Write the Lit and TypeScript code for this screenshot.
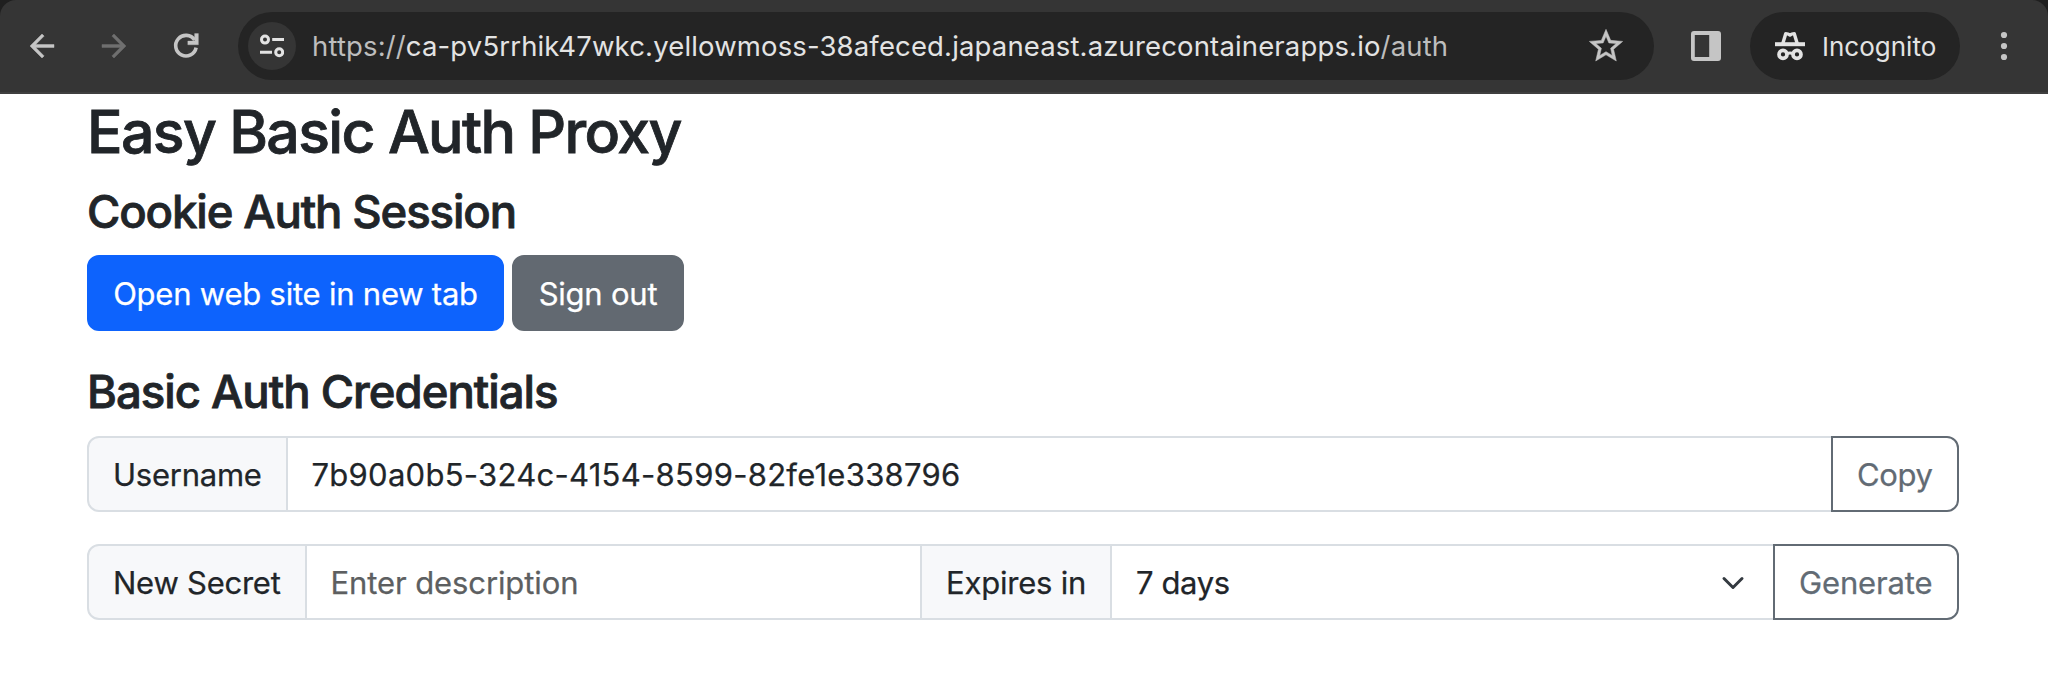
import { LitElement, html, css } from "lit";
import { customElement } from "lit/decorators.js";

@customElement("browser-toolbar")
class BrowserToolbar extends LitElement {
  static styles = css`
    :host { display: block; background: #1f1f1f; font-family: Inter, "Liberation Sans", sans-serif; }
    .bar {
      box-sizing: border-box; height: 94px; display: flex; align-items: center;
      background: #353535; border-bottom: 2px solid #3f3f3f;
      border-radius: 16px 16px 0 0; color: #c5c5c5; padding: 0 26px 0 24px;
    }
    svg { display: block; flex: none; fill: currentColor; }
    .nav { display: flex; gap: 36px; }
    .nav svg { stroke: currentColor; stroke-width: 0.3; }
    .nav .dim { color: #6f6f6f; }
    .address {
      box-sizing: border-box; width: 1416px; height: 68px; margin-left: 34px; padding: 0 28px 0 10px;
      display: flex; align-items: center; background: #242424; border-radius: 34px;
    }
    .site { width: 48px; height: 48px; border-radius: 50%; background: #353535; display: grid; place-items: center; color: #e3e3e3; }
    .url { flex: 1; margin-left: 16px; font-size: 27.5px; line-height: 34px; letter-spacing: 0.146px; white-space: nowrap; color: #bdbdbd; }
    .host { color: #e3e3e3; }
    .star { stroke: currentColor; stroke-width: 0.3; }
    .panel { margin-left: 37px; }
    .incognito {
      box-sizing: border-box; width: 210px; height: 68px; margin-left: 29px; padding-left: 25px; border-radius: 34px;
      background: #242424; color: #e3e3e3; display: flex; align-items: center; gap: 17px;
      font-size: 26px; line-height: 34px;
    }
    .incognito span { padding-top: 1px; }
    .more { margin-left: 35px; }
  `;

  render() {
    return html`
      <div class="bar">
        <div class="nav">
          <svg width="36" height="36" viewBox="0 0 24 24"><path d="M20 11H7.83l5.59-5.59L12 4l-8 8 8 8 1.41-1.41L7.83 13H20v-2z"/></svg>
          <svg class="dim" width="36" height="36" viewBox="0 0 24 24"><path d="M12 4l-1.41 1.41L16.17 11H4v2h12.17l-5.58 5.59L12 20l8-8z"/></svg>
          <svg width="36" height="36" viewBox="0 0 36 36"><path fill="none" stroke-width="3.6" d="M28.1 19.6A10.3 10.3 0 1 1 26.6 12"/><path d="M26.6 5.6h3.8v11.2H19.8V13h6.8z"/></svg>
        </div>
        <div class="address">
          <div class="site">
            <svg width="24" height="24" viewBox="0 0 24 24">
              <g fill="none" stroke="currentColor" stroke-width="3"><circle cx="5" cy="5.6" r="3.5"/><circle cx="19.2" cy="18.3" r="3.5"/><path d="M12.2 5.6H24M0 18.3h12"/></g>
            </svg>
          </div>
          <div class="url">https://<span class="host">ca-pv5rrhik47wkc.yellowmoss-38afeced.japaneast.azurecontainerapps.io</span>/auth</div>
          <svg class="star" width="40" height="40" viewBox="0 0 24 24"><path d="M22 9.24l-7.19-.62L12 2 9.19 8.63 2 9.24l5.46 4.73L5.82 21 12 17.27 18.18 21l-1.63-7.03L22 9.24zM12 15.4l-3.76 2.27 1-4.28-3.32-2.88 4.38-.38L12 6.1l1.71 4.04 4.38.38-3.32 2.88 1 4.28L12 15.4z"/></svg>
        </div>
        <svg class="panel" width="30" height="30" viewBox="0 0 30 30"><path fill-rule="evenodd" d="M3 0h24a3 3 0 0 1 3 3v24a3 3 0 0 1-3 3H3a3 3 0 0 1-3-3V3a3 3 0 0 1 3-3zm.8 4v22h14.4V4z"/></svg>
        <div class="incognito">
          <svg width="30" height="30" viewBox="0 0 30 30">
            <path d="M0 11.2h30v4H0z"/>
            <g fill="none" stroke="currentColor">
              <path stroke-width="3.4" stroke-linejoin="round" d="M7.8 12.5 10.8 2.6q2.2 0 4.2 1.4 2-1.4 4.2-1.4l3 9.9"/>
              <g stroke-width="3.7"><circle cx="8" cy="23.4" r="4"/><circle cx="22" cy="23.4" r="4"/></g>
              <path stroke-width="3" d="M11.5 22.8Q15 21 18.5 22.8"/>
            </g>
          </svg>
          <span>Incognito</span>
        </div>
        <svg class="more" width="18" height="30" viewBox="0 0 18 30"><circle cx="9" cy="4" r="3.1"/><circle cx="9" cy="15" r="3.1"/><circle cx="9" cy="26" r="3.1"/></svg>
      </div>
    `;
  }
}

@customElement("app-root")
class AppRoot extends LitElement {
  static styles = css`
    :host { display: block; min-height: 698px; background: #fff; color: #212529; font: 400 31px/48px Inter, "Liberation Sans", sans-serif; }
    * { box-sizing: border-box; }
    main { width: 1872px; margin-left: 87px; padding-top: 1px; white-space: nowrap; -webkit-text-stroke: 0.25px currentColor; }
    h2, h4 { margin: 0 0 16px; font-weight: 500; -webkit-text-stroke: 0.8px currentColor; }
    h2 { font-size: 59px; line-height: 73px; letter-spacing: -1.66px; }
    h4 { font-size: 45.5px; line-height: 56px; letter-spacing: -1.12px; margin-bottom: 15px; }
    .creds { letter-spacing: -1px; margin-bottom: 16px; }
    .actions { display: flex; gap: 8px; margin-bottom: 33px; }
    .btn { height: 76px; border: 2px solid; border-radius: 12px; padding: 13px 23px 11px; font: inherit; letter-spacing: -0.22px; }
    .primary { width: 417px; background: #0d63fd; border-color: #0d63fd; color: #fff; }
    .secondary { width: 172px; background: #626971; border-color: #626971; color: #fff; }
    .outline { background: #fff; border-color: #626b74; color: #626b74; border-radius: 0 12px 12px 0; margin-left: -2px; padding-inline: 24px; text-align: left; }
    .group { display: flex; height: 76px; margin-bottom: 32px; }
    .label, .field { border: 2px solid #d9dee3; padding: 13px 24px 11px; margin-left: -2px; }
    .label { background: #f7f8fa; letter-spacing: -0.24px; }
    .label:first-child { margin-left: 0; border-radius: 12px 0 0 12px; }
    .user { width: 201px; }
    .secret { width: 220px; }
    .expires { width: 192px; letter-spacing: -0.2px; }
    .grow { flex: 1; }
    .value { letter-spacing: 0.28px; padding-left: 23.5px; }
    .placeholder { color: #5d5f61; letter-spacing: -0.1px; padding-left: 23.5px; }
    .select { width: 665px; display: flex; align-items: center; justify-content: space-between; letter-spacing: -0.38px; padding-right: 28px; }
    .copy { width: 128px; letter-spacing: -0.4px; }
    .generate { width: 186px; letter-spacing: -0.14px; }
  `;

  render() {
    return html`
      <browser-toolbar></browser-toolbar>
      <main>
        <h2>Easy Basic Auth Proxy</h2>
        <h4>Cookie Auth Session</h4>
        <div class="actions">
          <button class="btn primary">Open web site in new tab</button>
          <button class="btn secondary">Sign out</button>
        </div>
        <h4 class="creds">Basic Auth Credentials</h4>
        <div class="group">
          <div class="label user">Username</div>
          <div class="field grow value">7b90a0b5-324c-4154-8599-82fe1e338796</div>
          <button class="btn outline copy">Copy</button>
        </div>
        <div class="group">
          <div class="label secret">New Secret</div>
          <div class="field grow placeholder">Enter description</div>
          <div class="label expires">Expires in</div>
          <div class="field select">
            <span>7 days</span>
            <svg width="24" height="24" viewBox="0 0 16 16"><path fill="none" stroke="#343a40" stroke-width="2" stroke-linecap="round" stroke-linejoin="round" d="m2 5 6 6 6-6"/></svg>
          </div>
          <button class="btn outline generate">Generate</button>
        </div>
      </main>
    `;
  }
}
